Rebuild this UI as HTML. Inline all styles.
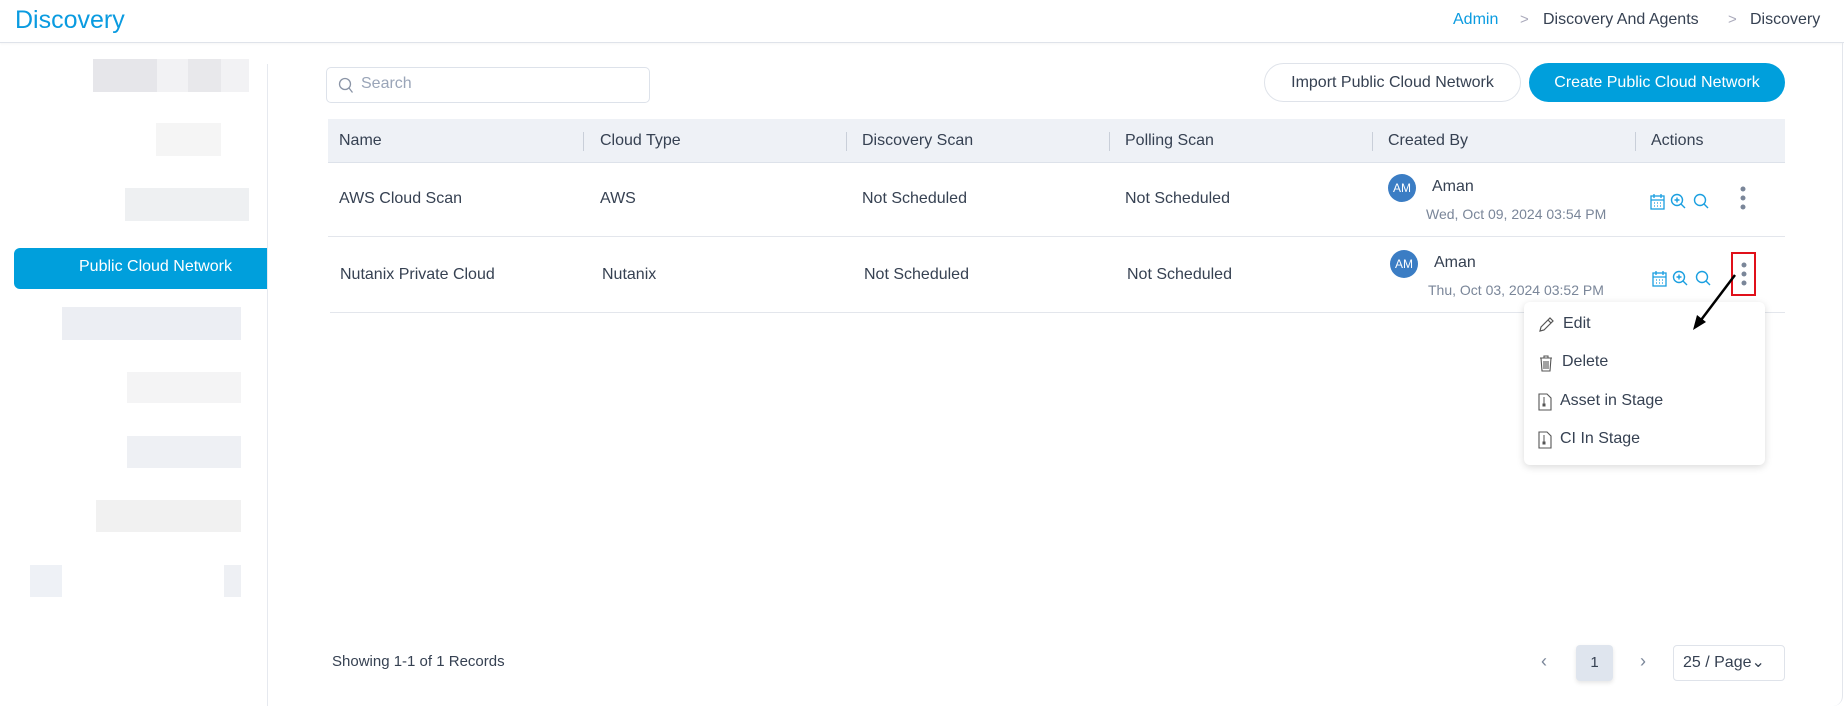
<!DOCTYPE html>
<html><head><meta charset="utf-8"><style>
*{box-sizing:border-box;margin:0;padding:0}
body{width:1844px;height:706px;background:#fff;font-family:"Liberation Sans",sans-serif;color:#364152;position:relative;overflow:hidden}
.a{position:absolute;white-space:nowrap}
.hd{left:0;top:0;width:1844px;height:43px;border-bottom:1px solid #dfe3ea;box-shadow:0 1px 2px rgba(0,0,0,.04)}
.th{font-size:16px;color:#364152;top:132px}
.td{font-size:16px;color:#364152}
.blk{position:absolute}
.mi{left:1560px;font-size:16px;color:#364152}
</style></head><body>
<div class="a hd"></div>
<div class="a" style="left:15px;top:6px;font-size:25px;color:#0a9be0">Discovery</div>
<div class="a" style="left:1453px;top:11px;font-size:16px;color:#0a9be0">Admin</div>
<div class="a" style="left:1520px;top:11px;font-size:15px;color:#aab">&gt;</div>
<div class="a" style="left:1543px;top:11px;font-size:16px">Discovery And Agents</div>
<div class="a" style="left:1728px;top:11px;font-size:15px;color:#aab">&gt;</div>
<div class="a" style="left:1750px;top:11px;font-size:16px">Discovery</div>
<div class="a" style="left:0;top:43px;width:1843px;height:663px;border-right:1px solid #e3e6ec;border-bottom-right-radius:10px"></div>
<div class="a" style="left:267px;top:64px;width:1px;height:642px;background:#e6e9ef"></div>
<div class="blk" style="left:93px;top:59px;width:156px;height:33px;background:#f2f2f4"></div>
<div class="blk" style="left:93px;top:59px;width:64px;height:33px;background:#e6e6ea"></div>
<div class="blk" style="left:188px;top:59px;width:33px;height:33px;background:#e8e8eb"></div>
<div class="blk" style="left:156px;top:123px;width:65px;height:33px;background:#f5f5f5"></div>
<div class="blk" style="left:125px;top:188px;width:124px;height:33px;background:#eef0f2"></div>
<div class="blk" style="left:14px;top:248px;width:253px;height:41px;background:#009fdc;border-radius:6px 0 0 6px"></div>
<div class="a" style="left:79px;top:258px;font-size:16px;color:#fff">Public Cloud Network</div>
<div class="blk" style="left:62px;top:307px;width:179px;height:33px;background:#eceef3"></div>
<div class="blk" style="left:127px;top:372px;width:114px;height:31px;background:#f4f4f5"></div>
<div class="blk" style="left:127px;top:436px;width:114px;height:32px;background:#eef0f4"></div>
<div class="blk" style="left:96px;top:500px;width:145px;height:32px;background:#f1f1f1"></div>
<div class="blk" style="left:30px;top:565px;width:32px;height:32px;background:#eef1f6"></div>
<div class="blk" style="left:224px;top:565px;width:17px;height:32px;background:#eef0f4"></div>
<div class="a" style="left:326px;top:67px;width:324px;height:36px;border:1px solid #dde2ea;border-radius:5px"></div>
<svg class="a" style="left:338px;top:77px" width="16" height="18" viewBox="0 0 16 18"><circle cx="7" cy="7" r="5.5" fill="none" stroke="#8a94a6" stroke-width="1.3"/><path d="M11 11l3.5 4.5" stroke="#8a94a6" stroke-width="1.3"/></svg>
<div class="a" style="left:361px;top:75px;font-size:16px;color:#9aa5b8">Search</div>
<div class="a" style="left:1264px;top:63px;width:257px;height:39px;border:1px solid #dfe3ea;border-radius:20px;font-size:16px;text-align:center;line-height:37px">Import Public Cloud Network</div>
<div class="a" style="left:1529px;top:63px;width:256px;height:39px;background:#009fdc;border-radius:20px;font-size:16px;text-align:center;line-height:39px;color:#fff">Create Public Cloud Network</div>
<div class="a" style="left:328px;top:119px;width:1457px;height:44px;background:#eef1f6;border-bottom:1px solid #dde2ea"></div>
<div class="a th" style="left:339px">Name</div>
<div class="a th" style="left:600px">Cloud Type</div>
<div class="a th" style="left:862px">Discovery Scan</div>
<div class="a th" style="left:1125px">Polling Scan</div>
<div class="a th" style="left:1388px">Created By</div>
<div class="a th" style="left:1651px">Actions</div>
<div class="a" style="left:583px;top:132px;width:1px;height:19px;background:#c9cfd9"></div>
<div class="a" style="left:846px;top:132px;width:1px;height:19px;background:#c9cfd9"></div>
<div class="a" style="left:1109px;top:132px;width:1px;height:19px;background:#c9cfd9"></div>
<div class="a" style="left:1372px;top:132px;width:1px;height:19px;background:#c9cfd9"></div>
<div class="a" style="left:1635px;top:132px;width:1px;height:19px;background:#c9cfd9"></div>
<div class="a" style="left:328px;top:236px;width:1457px;height:1px;background:#e3e6ec"></div>
<div class="a" style="left:330px;top:312px;width:1455px;height:1px;background:#e3e6ec"></div>
<div class="a td" style="left:339px;top:190px">AWS Cloud Scan</div>
<div class="a td" style="left:600px;top:190px">AWS</div>
<div class="a td" style="left:862px;top:190px">Not Scheduled</div>
<div class="a td" style="left:1125px;top:190px">Not Scheduled</div>
<div class="a td" style="left:340px;top:266px">Nutanix Private Cloud</div>
<div class="a td" style="left:602px;top:266px">Nutanix</div>
<div class="a td" style="left:864px;top:266px">Not Scheduled</div>
<div class="a td" style="left:1127px;top:266px">Not Scheduled</div>
<div class="a" style="left:1388px;top:174px;width:28px;height:28px;border-radius:50%;background:#3b7dc4;color:#fff;font-size:12px;text-align:center;line-height:28px">AM</div>
<div class="a td" style="left:1432px;top:178px">Aman</div>
<div class="a" style="left:1426px;top:206px;font-size:14px;color:#7a8699">Wed, Oct 09, 2024 03:54 PM</div>
<div class="a" style="left:1390px;top:250px;width:28px;height:28px;border-radius:50%;background:#3b7dc4;color:#fff;font-size:12px;text-align:center;line-height:28px">AM</div>
<div class="a td" style="left:1434px;top:254px">Aman</div>
<div class="a" style="left:1428px;top:282px;font-size:14px;color:#7a8699">Thu, Oct 03, 2024 03:52 PM</div>
<svg class="a" style="left:1650px;top:193px" width="75" height="18" viewBox="0 0 75 18">
<rect x="1" y="3" width="13" height="13" fill="none" stroke="#1a9fe0" stroke-width="1.3"/><path d="M1 7h13M4 1v4M11 1v4" stroke="#1a9fe0" stroke-width="1.3"/><path d="M4 10h1M7 10h1M10 10h1M4 13h1M7 13h1M10 13h1" stroke="#1a9fe0" stroke-width="1.3"/>
<circle cx="27" cy="7" r="5.5" fill="none" stroke="#1a9fe0" stroke-width="1.4"/><path d="M27 4.5v5M24.5 7h5M31 11l4 4" stroke="#1a9fe0" stroke-width="1.4"/>
<circle cx="50" cy="7" r="5.5" fill="none" stroke="#1a9fe0" stroke-width="1.4"/><path d="M54 11l4 4" stroke="#1a9fe0" stroke-width="1.4"/></svg>
<svg class="a" style="left:1652px;top:270px" width="75" height="18" viewBox="0 0 75 18">
<rect x="1" y="3" width="13" height="13" fill="none" stroke="#1a9fe0" stroke-width="1.3"/><path d="M1 7h13M4 1v4M11 1v4" stroke="#1a9fe0" stroke-width="1.3"/><path d="M4 10h1M7 10h1M10 10h1M4 13h1M7 13h1M10 13h1" stroke="#1a9fe0" stroke-width="1.3"/>
<circle cx="27" cy="7" r="5.5" fill="none" stroke="#1a9fe0" stroke-width="1.4"/><path d="M27 4.5v5M24.5 7h5M31 11l4 4" stroke="#1a9fe0" stroke-width="1.4"/>
<circle cx="50" cy="7" r="5.5" fill="none" stroke="#1a9fe0" stroke-width="1.4"/><path d="M54 11l4 4" stroke="#1a9fe0" stroke-width="1.4"/></svg>
<svg class="a" style="left:1738px;top:185px" width="10" height="26"><circle cx="5" cy="4" r="2.5" fill="#7a8699"/><circle cx="5" cy="13" r="2.5" fill="#7a8699"/><circle cx="5" cy="22" r="2.5" fill="#7a8699"/></svg>
<div class="a" style="left:1731px;top:252px;width:25px;height:44px;border:2.5px solid #e0101a"></div>
<svg class="a" style="left:1739px;top:261px" width="10" height="26"><circle cx="5" cy="4" r="2.5" fill="#7a8699"/><circle cx="5" cy="13" r="2.5" fill="#7a8699"/><circle cx="5" cy="22" r="2.5" fill="#7a8699"/></svg>
<div class="a" style="left:1524px;top:302px;width:241px;height:163px;background:#fff;border-radius:6px;box-shadow:0 2px 8px rgba(0,0,0,.15)"></div>
<svg class="a" style="left:1690px;top:272px" width="50" height="60"><path d="M45 3L8 52" stroke="#000" stroke-width="2.5"/><path d="M3 58l4-15 9 7z" fill="#000"/></svg>
<svg class="a" style="left:1538px;top:316px" width="16" height="17"><path d="M2 15l1-4 9-9 3 3-9 9z M10 4l3 3" fill="none" stroke="#555" stroke-width="1.2"/></svg>
<div class="a mi" style="left:1563px;top:315px">Edit</div>
<svg class="a" style="left:1538px;top:355px" width="16" height="17"><path d="M2 3h12M6 3V1h4v2M3 3l1 13h8l1-13M6 6v8M8 6v8M10 6v8" fill="none" stroke="#555" stroke-width="1.1"/></svg>
<div class="a mi" style="left:1562px;top:353px">Delete</div>
<svg class="a" style="left:1538px;top:393px" width="14" height="18"><path d="M1 1h8l4 4v12H1z" fill="none" stroke="#555" stroke-width="1.1"/><path d="M6 4v9M5 11h2v2H5z" stroke="#555" stroke-width="1"/></svg>
<div class="a mi" style="left:1560px;top:392px">Asset in Stage</div>
<svg class="a" style="left:1538px;top:431px" width="14" height="18"><path d="M1 1h8l4 4v12H1z" fill="none" stroke="#555" stroke-width="1.1"/><path d="M6 4v9M5 11h2v2H5z" stroke="#555" stroke-width="1"/></svg>
<div class="a mi" style="left:1560px;top:430px">CI In Stage</div>
<div class="a" style="left:332px;top:653px;font-size:15px">Showing 1-1 of 1 Records</div>
<div class="a" style="left:1541px;top:651px;font-size:18px;color:#7a8699">&lsaquo;</div>
<div class="a" style="left:1576px;top:645px;width:37px;height:36px;background:#dfe5ee;border-radius:4px;box-shadow:0 2px 4px rgba(0,0,0,.1);text-align:center;line-height:36px;font-size:15px">1</div>
<div class="a" style="left:1640px;top:651px;font-size:18px;color:#7a8699">&rsaquo;</div>
<div class="a" style="left:1673px;top:645px;width:112px;height:36px;border:1px solid #dfe3ea;border-radius:4px;font-size:16px;line-height:34px;padding-left:9px">25 / Page&#8964;</div>
</body></html>
